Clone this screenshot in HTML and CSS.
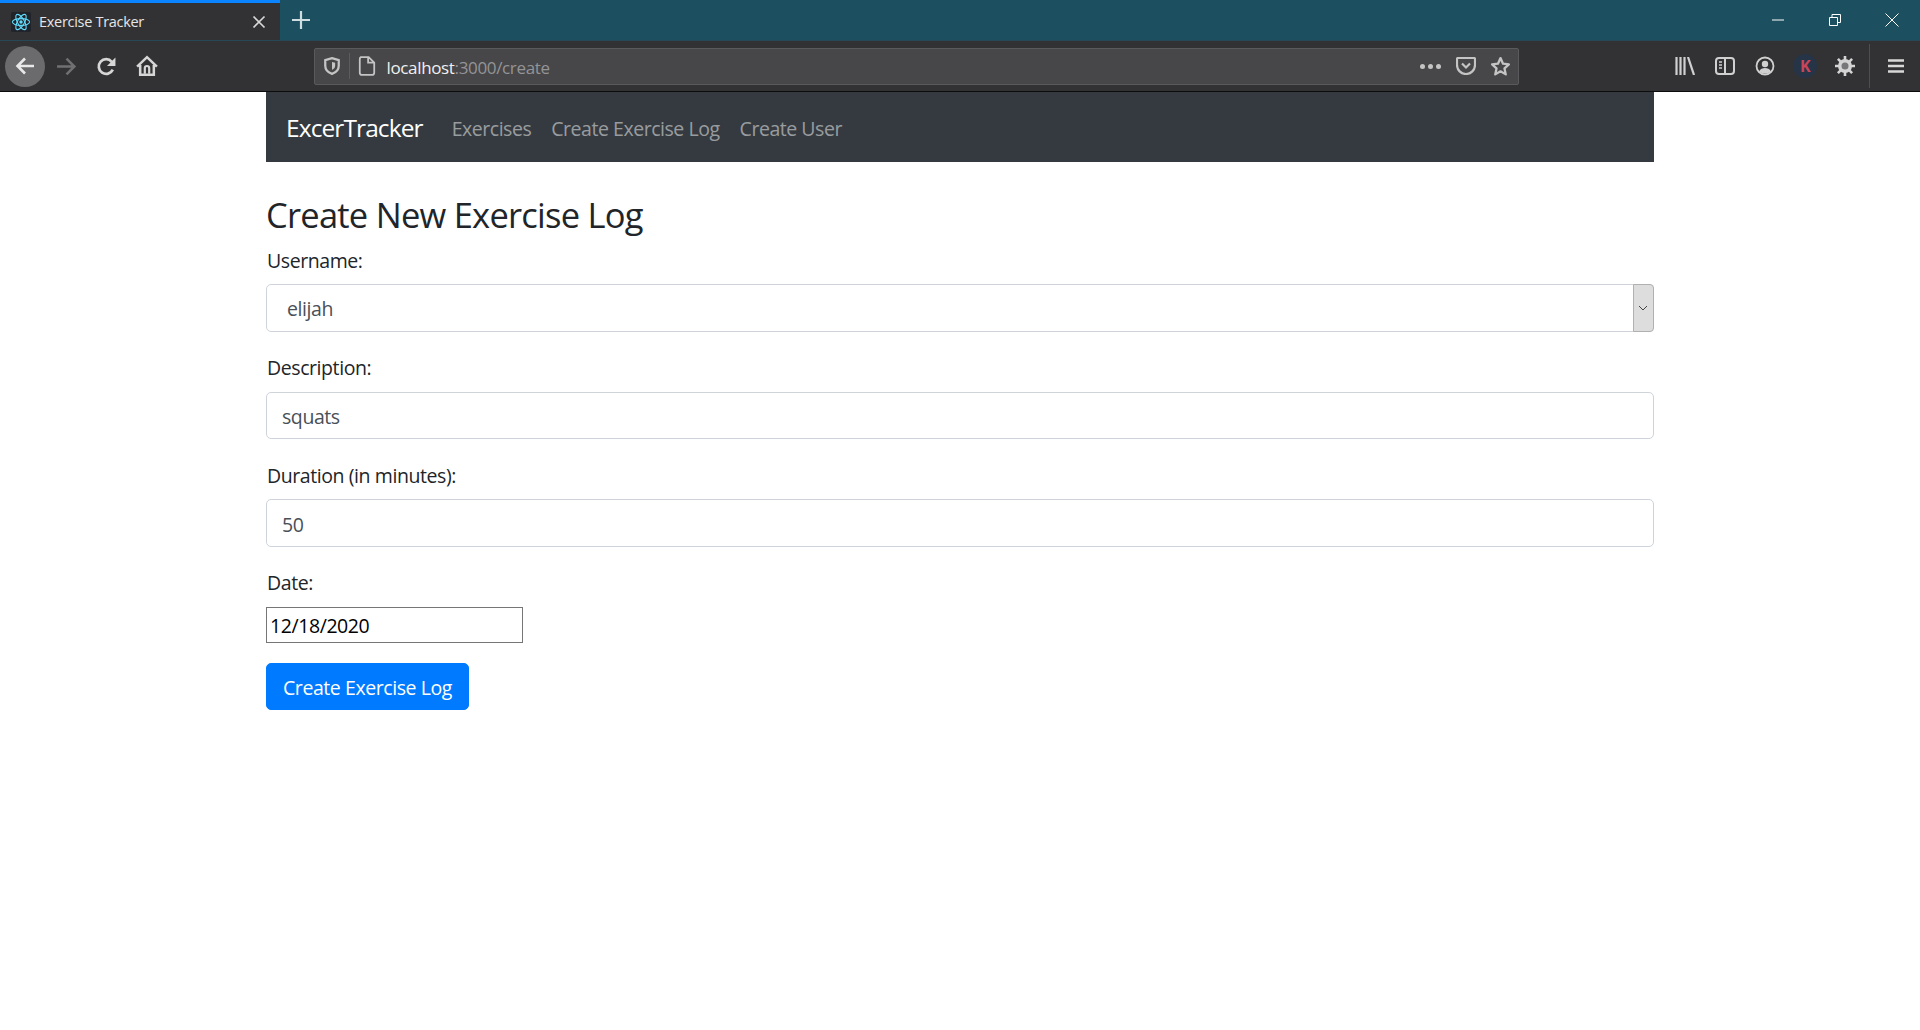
FILE: index.html
```html
<!DOCTYPE html>
<html lang="en">
<head>
<meta charset="utf-8">
<title>Exercise Tracker</title>
<link rel="stylesheet" href="styles.css">
</head>
<body>
<header class="browser">
  <div class="tabstrip">
    <div class="tab">
      <svg class="favicon" viewBox="0 0 20 20" width="20" height="20"><rect width="20" height="20" rx="2" fill="#20232a"/><g fill="none" stroke="#61dafb" stroke-width="1.1"><ellipse cx="10" cy="10" rx="8.6" ry="3.4"/><ellipse cx="10" cy="10" rx="8.6" ry="3.4" transform="rotate(60 10 10)"/><ellipse cx="10" cy="10" rx="8.6" ry="3.4" transform="rotate(120 10 10)"/></g><circle cx="10" cy="10" r="1.7" fill="#61dafb"/></svg>
      <span class="tab-title">Exercise Tracker</span>
      <svg class="tab-close" viewBox="0 0 14 14" width="14" height="14"><path d="M1.5 1.5l11 11M12.5 1.5l-11 11" stroke="#d8d8d8" stroke-width="1.7" fill="none"/></svg>
    </div>
    <div class="newtab"><svg viewBox="0 0 18 18" width="18" height="18"><path d="M9 0v18M0 9h18" stroke="#cfdde0" stroke-width="2.200" fill="none"/></svg></div>
    <div class="winctl">
      <svg class="win-min" viewBox="0 0 12 12" width="12" height="12"><path d="M0 6h12" stroke="#fff" fill="none"/></svg>
      <svg viewBox="0 0 12 12" width="12" height="12"><path d="M.5 3.5h8v8h-8zM3 3.5V.5h8.5v8h-3" stroke="#fff" fill="none"/></svg>
      <svg viewBox="0 0 14 14" width="14" height="14"><path d="M.5.5l13 13M13.500.5l-13 13" stroke="#fff" fill="none"/></svg>
    </div>
  </div>
  <div class="toolbar">
    <div class="navbtns">
      <div class="tbtn tbtn-back"><svg viewBox="0 0 20 20" width="20" height="20"><path d="M19 10H3M10 2.500L2.500 10l7.500 7.500" stroke="#e8e8e8" stroke-width="2.600" fill="none"/></svg></div>
      <div class="tbtn"><svg viewBox="0 0 20 20" width="21" height="21"><path d="M1 10h16M10 2.500l7.500 7.500-7.500 7.500" stroke="#707072" stroke-width="2.400" fill="none"/></svg></div>
      <div class="tbtn"><svg viewBox="0 0 20 20" width="21" height="21"><path d="M16 13A7 7 0 1 1 15 5.500" stroke="#d6d6d6" stroke-width="2.600" fill="none"/><path d="M18.500 1.500v8H10.500z" fill="#d6d6d6"/></svg></div>
      <div class="tbtn"><svg viewBox="0 0 20 20" width="22" height="22"><path d="M1 10.500L10 2l9 8.500M3.800 9v9h12.400V9" stroke="#d6d6d6" stroke-width="2.300" fill="none"/><path d="M8 17v-5a2 2 0 0 1 4 0v5" stroke="#d6d6d6" stroke-width="2" fill="none"/></svg></div>
    </div>
    <div class="urlbar">
      <svg class="ub-shield" viewBox="0 0 16 16" width="18" height="18"><path d="M8 1l6 1.800v5C14 11.500 11 14 8 15 5 14 2 11.500 2 7.800v-5z" stroke="#c4c4c4" stroke-width="2" fill="none"/><path d="M8 4.500l2.800.7V8c0 1.500-1.400 2.800-2.800 3.400z" fill="#c4c4c4"/></svg>
      <span class="ub-sep"></span>
      <svg class="ub-doc" viewBox="0 0 16 18" width="18" height="20"><path d="M2.500 1h7L14.500 6v9a2 2 0 0 1-2 2H3.500a2 2 0 0 1-2-2V3a2 2 0 0 1 1-2zM9 1v5h5.500" stroke="#c4c4c4" stroke-width="1.600" fill="none"/></svg>
      <span class="ub-text"><span class="ub-host">localhost</span>:3000/create</span>
      <span class="ub-dots"><i></i><i></i><i></i></span>
      <svg class="ub-pocket" viewBox="0 0 20 18" width="20" height="18"><path d="M2 1h16a1 1 0 0 1 1 1v6a9 9 0 0 1-18 0V2a1 1 0 0 1 1-1z" stroke="#c4c4c4" stroke-width="2.200" fill="none"/><path d="M6 6.500l4 4 4-4" stroke="#c4c4c4" stroke-width="2.200" fill="none"/></svg>
      <svg class="ub-star" viewBox="0 0 20 20" width="21" height="21"><path d="M10 2l2.400 5.300 5.600.6-4.200 3.900 1.200 5.700L10 14.600l-5 2.900 1.200-5.700L2 7.900l5.600-.6z" stroke="#c4c4c4" stroke-width="2.200" stroke-linejoin="round" fill="none"/></svg>
    </div>
    <div class="tools">
      <div class="tbtn"><svg viewBox="0 0 20 18" width="20" height="18"><path d="M1.500 0v18M5.500 0v18M9.500 0v18M13 0l6 18" stroke="#d0d0d0" stroke-width="2.200" fill="none"/></svg></div>
      <div class="tbtn"><svg viewBox="0 0 20 18" width="20" height="18"><rect x="1" y="1" width="18" height="16" rx="3" stroke="#d0d0d0" stroke-width="2" fill="none"/><path d="M10 1v16" stroke="#d0d0d0" stroke-width="2"/><path d="M4 5h3M4 8h3M4 11h3" stroke="#d0d0d0" stroke-width="1.300"/></svg></div>
      <div class="tbtn"><svg viewBox="0 0 20 20" width="20" height="20"><circle cx="10" cy="10" r="8.500" stroke="#d0d0d0" stroke-width="1.800" fill="none"/><circle cx="10" cy="8" r="3.200" fill="#d0d0d0"/><path d="M4 15.500c1.500-3 3.500-3.500 6-3.500s4.500.5 6 3.500c-3 2.500-9 2.500-12 0z" fill="#d0d0d0"/></svg></div>
      <div class="tbtn"><span class="avatar">K</span></div>
      <div class="tbtn"><svg viewBox="0 0 20 20" width="20" height="20"><g fill="#d4d4d4"><circle cx="10" cy="10" r="7"/><g stroke="#d4d4d4" stroke-width="2.600"><path d="M10 0v20M0 10h20M2.900 2.900l14.200 14.200M17.100 2.900L2.900 17.100"/></g></g><circle cx="10" cy="10" r="3.500" fill="#77777a"/></svg></div>
      <span class="tool-sep"></span>
      <div class="tbtn"><svg viewBox="0 0 16 14" width="16" height="14"><path d="M0 1.500h16M0 7h16M0 12.500h16" stroke="#d8d8d8" stroke-width="2.300" fill="none"/></svg></div>
    </div>
  </div>
</header>

<div class="container">
  <nav class="navbar">
    <a class="brand" href="#">ExcerTracker</a>
    <ul class="navlinks">
      <li><a href="#">Exercises</a></li>
      <li><a href="#">Create Exercise Log</a></li>
      <li><a href="#">Create User</a></li>
    </ul>
  </nav>
  <main class="page">
    <h3 class="title">Create New Exercise Log</h3>
    <form>
      <div class="group">
        <label class="label">Username:</label>
        <div class="select-wrap">
          <select class="control control-select"><option>elijah</option></select>
          <span class="select-btn"><svg viewBox="0 0 10 6" width="10" height="6"><path d="M1 1l4 4 4-4" stroke="#444" stroke-width="1" fill="none"/></svg></span>
        </div>
      </div>
      <div class="group">
        <label class="label">Description:</label>
        <input class="control" type="text" value="squats">
      </div>
      <div class="group">
        <label class="label">Duration (in minutes):</label>
        <input class="control" type="text" value="50">
      </div>
      <div class="group">
        <label class="label">Date:</label>
        <input class="date" type="text" value="12/18/2020">
      </div>
      <button class="submit" type="button">Create Exercise Log</button>
    </form>
  </main>
</div>
</body>
</html>
```
FILE: styles.css
```css
* { box-sizing: border-box; }
html, body { margin: 0; height: 100%; }
body {
  background: #fff;
  color: #212529;
  font-family: "Open Sans", "Noto Sans", sans-serif;
  font-size: 19.500px;
  line-height: 30px;
  letter-spacing: -0.42px;
  overflow: hidden;
}

/* Browser chrome */
.browser { height: 92px; background: #323234; border-bottom: 1px solid #0c0c0d; }
.tabstrip { height: 41px; background: #1c4f5f; display: flex; align-items: stretch; border-bottom: 1px solid #254a56; }
.tab {
  width: 280px;
  background: #323234;
  border-top: 3px solid #0a84ff;
  display: flex;
  align-items: center;
  padding: 0 14px 0 11px;
  color: #e6e6e6;
  font-size: 14.500px;
  line-height: 20px;
}
.favicon { flex: none; margin-right: 8px; }
.tab-title { flex: 1; letter-spacing: -0.3px; }
.tab-close { flex: none; margin-top: 1px; }
.newtab { width: 42px; display: flex; align-items: center; justify-content: center; }
.winctl { margin-left: auto; display: flex; align-items: center; gap: 44px; padding-right: 21px; }
.win-min { margin-right: 1px; }
.toolbar { height: 50px; display: flex; align-items: center; padding-left: 5px; }
.navbtns { display: flex; align-items: center; width: 308.500px; }
.tbtn { width: 40px; height: 40px; display: flex; align-items: center; justify-content: center; flex: none; }
.tbtn-back { height: 41px; margin-right: 1.500px; background: #6b6b6d; border-radius: 50%; }
.urlbar {
  width: 1205.500px;
  height: 37px;
  background: #474749;
  border: 1px solid #5a5a5c;
  border-radius: 2px;
  display: flex;
  align-items: center;
  color: #949496;
  font-size: 17px;
  line-height: 24px;
}
.ub-shield { margin-left: 8px; flex: none; }
.ub-sep { width: 1px; height: 26px; background: #5c5c5e; margin: 0 8px; }
.ub-doc { flex: none; }
.ub-text { flex: 1; margin-left: 11px; padding-top: 3px; letter-spacing: -0.35px; }
.ub-host { color: #f0f0f0; }
.ub-dots { display: flex; gap: 3px; margin-right: 15px; }
.ub-dots i { width: 5px; height: 5px; border-radius: 50%; background: #c4c4c4; }
.ub-pocket { flex: none; margin-right: 14px; }
.ub-star { flex: none; margin-right: 7px; }
.tools { display: flex; align-items: center; margin-left: 146px; }
.avatar {
  width: 24px; height: 24px; border-radius: 50%;
  background: #263448; color: #c8455a;
  font-size: 16px; font-weight: 700; line-height: 24px; text-align: center;
}
.tool-sep { width: 1px; height: 44px; background: #4e4e50; margin: 0 6px 0 4px; flex: none; }

/* Page */
.container { width: 1388px; margin: 0 auto; }
.navbar {
  height: 70px;
  background: #343a40;
  display: flex;
  align-items: center;
  padding: 0 20px;
}
.brand { color: #fff; font-size: 24.500px; line-height: 38px; padding-top: 2px; text-decoration: none; margin-right: 19px; letter-spacing: -0.9px; }
.navlinks { display: flex; list-style: none; margin: 0; padding: 4px 0 0; }
.navlinks a { display: block; padding: 0 10px; color: rgba(255, 255, 255, .5); text-decoration: none; letter-spacing: -0.46px; }
.page { padding-top: 30px; }
.title { margin: 0 0 10px; padding-top: 2.500px; height: 42px; font-size: 34.500px; font-weight: 400; line-height: 40px; letter-spacing: -0.76px; }
.group { margin-bottom: 20px; }
.label { display: block; height: 30px; padding: 1.500px 0 0 1px; margin-bottom: 10px; }
.control {
  display: block;
  width: 100%;
  height: 47.500px;
  padding: 9px 15px 6px;
  background: #fff;
  border: 1px solid #ced4da;
  border-radius: 5px;
  color: #495057;
  font: inherit;
  letter-spacing: inherit;
  outline: 0;
}
.select-wrap { position: relative; }
.control-select { appearance: none; padding-left: 20px; }
.select-btn {
  position: absolute;
  top: 0; right: 0;
  width: 21px; height: 47.500px;
  padding-right: 2px;
  background: #dddddd;
  border: 1px solid #b0b0b0;
  border-radius: 0 4px 4px 0;
  display: flex; align-items: center; justify-content: center;
}
.date {
  display: block;
  width: 257px;
  height: 36px;
  padding: 2px 3px 0;
  border: 1px solid #767676;
  border-radius: 0;
  background: #fff;
  color: #000;
  font: inherit;
  letter-spacing: inherit;
  outline: 0;
}
.submit {
  display: block;
  height: 47.500px;
  width: 203px;
  padding: 3px 0 0;
  background: #007bff;
  border: 1px solid #007bff;
  border-radius: 5px;
  color: #fff;
  font: inherit;
  letter-spacing: inherit;
}
```
